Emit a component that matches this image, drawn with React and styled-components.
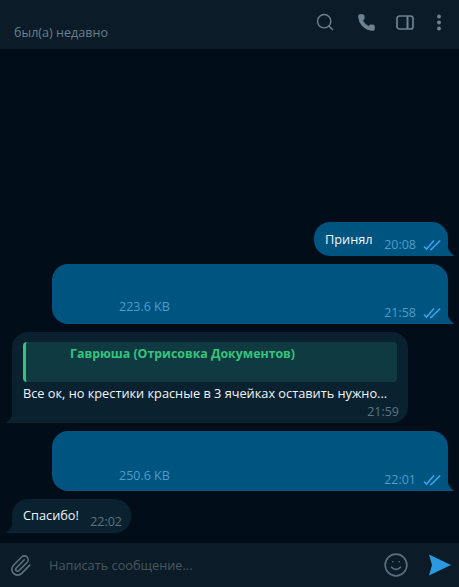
import styled, { createGlobalStyle } from "styled-components";
import { Search, Phone, Paperclip, Smile } from "lucide-react";

const Global = createGlobalStyle`
  html, body {
    margin: 0;
    height: 100%;
    background: #020d1a;
    font-family: "Open Sans", "Noto Sans", sans-serif;
  }
  #root {
    height: 100%;
  }
`;

const Page = styled.div`
  width: 459px;
  height: 587px;
  display: flex;
  flex-direction: column;
  overflow: hidden;
  background: #020d1a;
`;

const Header = styled.header`
  height: 49px;
  flex: none;
  box-sizing: border-box;
  padding: 0 15px 0 14px;
  display: flex;
  justify-content: space-between;
  background: #0b1b28;
`;

const Status = styled.div`
  margin-top: 24px;
  font-size: 12.6px;
  line-height: 17px;
  color: #64808f;
`;

const Tools = styled.div`
  display: flex;
  align-items: center;
  height: 44px;
  color: #6f8290;
`;

const ToolSlot = styled.span`
  display: flex;
  justify-content: center;
  width: ${(p) => p.$w}px;
  margin-left: ${(p) => p.$gap || 0}px;
`;

const Chat = styled.main`
  flex: 1;
  display: flex;
  flex-direction: column;
  justify-content: flex-end;
  gap: 8px;
  padding: 0 11px 10px 12px;
`;

const Bubble = styled.div`
  position: relative;
  box-sizing: border-box;
  align-self: ${(p) => (p.$out ? "flex-end" : "flex-start")};
  width: ${(p) => p.$w}px;
  height: ${(p) => p.$h}px;
  padding: ${(p) => p.$pad || "0"};
  background: ${(p) => (p.$out ? "#005480" : "#0a2230")};
  border-radius: ${(p) => (p.$out ? "16px 16px 0 16px" : "16px 16px 16px 0")};
`;

const Tail = styled.svg`
  position: absolute;
  bottom: 0;
  width: 7px;
  height: 12px;
  ${(p) => (p.$out ? "right: -6px;" : "left: -6px; transform: scaleX(-1);")}
  fill: ${(p) => (p.$out ? "#005480" : "#0a2230")};
`;

const Text = styled.div`
  font-size: 12.75px;
  line-height: 17px;
  color: #f2f6f8;
  white-space: nowrap;
`;

const Meta = styled.div`
  position: absolute;
  right: ${(p) => p.$right}px;
  bottom: ${(p) => p.$bottom}px;
  display: flex;
  align-items: center;
  gap: 7px;
  font-size: 12.5px;
  line-height: 16px;
  color: ${(p) => (p.$out ? "#4e9ccb" : "#5c7382")};
`;

const Size = styled.span`
  position: absolute;
  left: 67px;
  bottom: ${(p) => p.$bottom}px;
  font-size: 12.5px;
  line-height: 16px;
  color: #4e9ccb;
`;

const Quote = styled.div`
  box-sizing: border-box;
  height: 40px;
  margin-bottom: 3px;
  padding: 3px 0 0 44px;
  background: #103a42;
  border-left: 3px solid #35c47c;
  border-radius: 4px;
  font-size: 12.35px;
  font-weight: 700;
  line-height: 17px;
  color: #35c47c;
`;

const Composer = styled.footer`
  height: 44px;
  flex: none;
  box-sizing: border-box;
  padding: 0 8px 0 9px;
  display: flex;
  align-items: center;
  background: #0b1b28;
  color: #5d6f7c;
`;

const Placeholder = styled.div`
  flex: 1;
  margin-left: 17px;
  font-size: 12.75px;
  color: #47585f;
`;

const SendIcon = styled.svg`
  width: 24px;
  height: 24px;
  margin-left: 18px;
  fill: #2a9ae0;
`;

const Checks = () => (
  <svg width="19" height="11" viewBox="0 0 19 11" fill="none" stroke="#38a5ea" strokeWidth="1.6">
    <path d="M1 6.5l2.5 2.5 7.5-8.5" />
    <path d="M7 9.5l1.2 0 9-9" />
  </svg>
);

const BubbleTail = ({ out }) => (
  <Tail $out={out} viewBox="0 0 7 12">
    <path d="M0 0C0.5 5 3 9 7 12H0z" />
  </Tail>
);

const App = () => (
  <Page>
    <Global />
    <Header>
      <Status>был(а) недавно</Status>
      <Tools>
        <ToolSlot $w={20}>
          <Search size={20} strokeWidth={1.7} />
        </ToolSlot>
        <ToolSlot $w={20} $gap={21}>
          <Phone size={19} fill="currentColor" strokeWidth={1} />
        </ToolSlot>
        <ToolSlot $w={20} $gap={19}>
          <svg width="18" height="15" viewBox="0 0 18 15" fill="none" stroke="currentColor" strokeWidth="1.7">
            <rect x="1" y="1" width="16" height="13" rx="2.5" />
            <path d="M11.5 1v13" strokeWidth="2" />
          </svg>
        </ToolSlot>
        <ToolSlot $w={10} $gap={19}>
          <svg width="6" height="17" viewBox="0 0 6 17" fill="currentColor">
            <circle cx="3" cy="2.5" r="2" />
            <circle cx="3" cy="8.5" r="2" />
            <circle cx="3" cy="14.5" r="2" />
          </svg>
        </ToolSlot>
      </Tools>
    </Header>
    <Chat>
      <Bubble $out $w={134} $h={34} $pad="9px 0 0 11px">
        <Text>Принял</Text>
        <Meta $out $right={6} $bottom={3}>
          20:08
          <Checks />
        </Meta>
        <BubbleTail out />
      </Bubble>
      <Bubble $out $w={396} $h={60}>
        <Size $bottom={9}>223.6 KB</Size>
        <Meta $out $right={6} $bottom={3}>
          21:58
          <Checks />
        </Meta>
        <BubbleTail out />
      </Bubble>
      <Bubble $w={396} $h={91} $pad="10px 11px 0">
        <Quote>Гаврюша (Отрисовка Документов)</Quote>
        <Text>Все ок, но крестики красные в 3 ячейках оставить нужно...</Text>
        <Meta $right={9} $bottom={3}>21:59</Meta>
        <BubbleTail />
      </Bubble>
      <Bubble $out $w={396} $h={60}>
        <Size $bottom={7}>250.6 KB</Size>
        <Meta $out $right={6} $bottom={3}>
          22:01
          <Checks />
        </Meta>
        <BubbleTail out />
      </Bubble>
      <Bubble $w={119} $h={34} $pad="8px 0 0 11px">
        <Text>Спасибо!</Text>
        <Meta $right={9} $bottom={3}>22:02</Meta>
        <BubbleTail />
      </Bubble>
    </Chat>
    <Composer>
      <Paperclip size={23} strokeWidth={1.7} />
      <Placeholder>Написать сообщение...</Placeholder>
      <Smile size={26} strokeWidth={1.5} />
      <SendIcon viewBox="0 0 24 24">
        <path d="M2 1.5L24 12 2 22.5 5 12z" />
      </SendIcon>
    </Composer>
  </Page>
);

export default App;
